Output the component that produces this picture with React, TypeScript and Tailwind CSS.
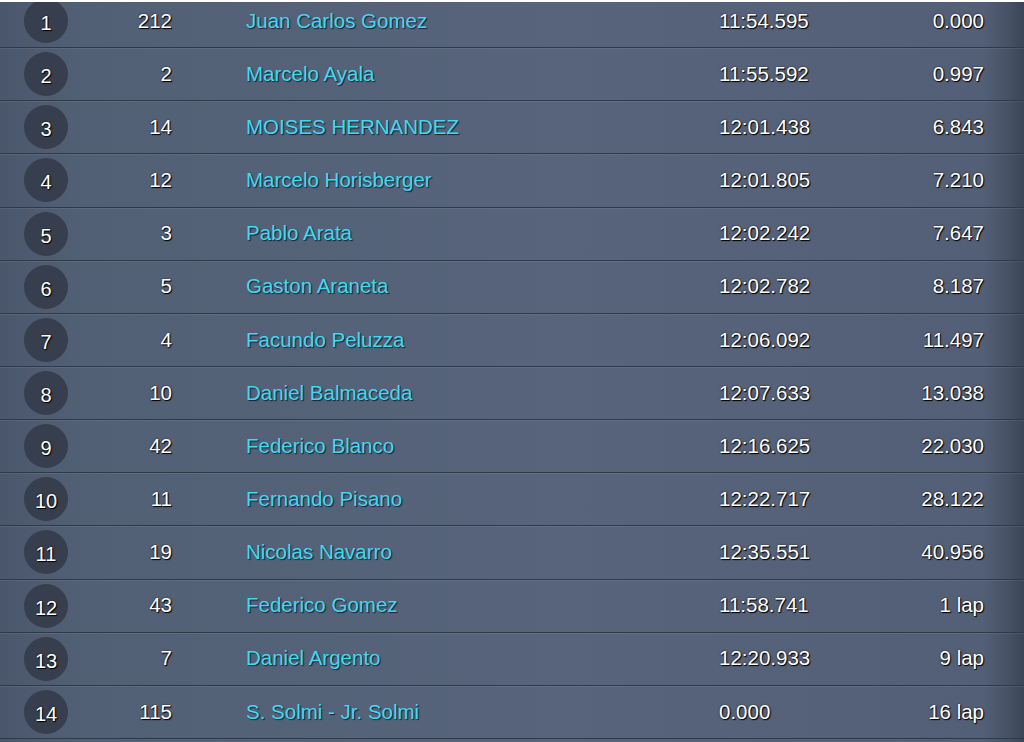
const results = [
  { pos: 1, num: '212', name: 'Juan Carlos Gomez', time: '11:54.595', gap: '0.000' },
  { pos: 2, num: '2', name: 'Marcelo Ayala', time: '11:55.592', gap: '0.997' },
  { pos: 3, num: '14', name: 'MOISES HERNANDEZ', time: '12:01.438', gap: '6.843' },
  { pos: 4, num: '12', name: 'Marcelo Horisberger', time: '12:01.805', gap: '7.210' },
  { pos: 5, num: '3', name: 'Pablo Arata', time: '12:02.242', gap: '7.647' },
  { pos: 6, num: '5', name: 'Gaston Araneta', time: '12:02.782', gap: '8.187' },
  { pos: 7, num: '4', name: 'Facundo Peluzza', time: '12:06.092', gap: '11.497' },
  { pos: 8, num: '10', name: 'Daniel Balmaceda', time: '12:07.633', gap: '13.038' },
  { pos: 9, num: '42', name: 'Federico Blanco', time: '12:16.625', gap: '22.030' },
  { pos: 10, num: '11', name: 'Fernando Pisano', time: '12:22.717', gap: '28.122' },
  { pos: 11, num: '19', name: 'Nicolas Navarro', time: '12:35.551', gap: '40.956' },
  { pos: 12, num: '43', name: 'Federico Gomez', time: '11:58.741', gap: '1 lap' },
  { pos: 13, num: '7', name: 'Daniel Argento', time: '12:20.933', gap: '9 lap' },
  { pos: 14, num: '115', name: 'S. Solmi - Jr. Solmi', time: '0.000', gap: '16 lap' },
]

const ResultRow = ({ row }: { row: (typeof results)[number] }) => (
  <div className="flex h-[53.15px] shrink-0 items-center border-b border-[#2e394a] pl-[24px] shadow-[inset_0_1px_0_rgba(255,255,255,0.07)]">
    <div className="flex h-[44px] w-[44px] shrink-0 items-center justify-center rounded-full bg-[#373f4e] pt-[4px] text-[20px] text-white [text-shadow:1px_1px_1px_#000,0_0_2px_rgba(0,0,0,0.7)]">
      {row.pos}
    </div>
    <div className="w-[104px] shrink-0 text-right text-white [text-shadow:1px_1px_1px_#000,0_0_2px_rgba(0,0,0,0.7)]">
      {row.num}
    </div>
    <div className="ml-[74px] w-[473px] shrink-0 text-[#42d8f2] [text-shadow:1px_1px_1px_#1a2230]">
      {row.name}
    </div>
    <div className="w-[140px] shrink-0 text-white [text-shadow:1px_1px_1px_#000,0_0_2px_rgba(0,0,0,0.7)]">
      {row.time}
    </div>
    <div className="w-[125px] shrink-0 text-right text-white [text-shadow:1px_1px_1px_#000,0_0_2px_rgba(0,0,0,0.7)]">
      {row.gap}
    </div>
  </div>
)

const App = () => {
  return (
    <div className="h-[742px] w-[1024px] overflow-hidden border-t-2 border-white bg-[linear-gradient(to_right,#4a566b_0%,#526076_8%,#57647b_55%,#535f76_96%,#465165_98.5%,#3b4556_100%)] font-['Liberation_Sans',Arial,sans-serif] text-[20.5px]">
      <div className="-mt-[7px] flex flex-col">
        {results.map((row) => (
          <ResultRow key={row.pos} row={row} />
        ))}
      </div>
    </div>
  )
}

export default App
